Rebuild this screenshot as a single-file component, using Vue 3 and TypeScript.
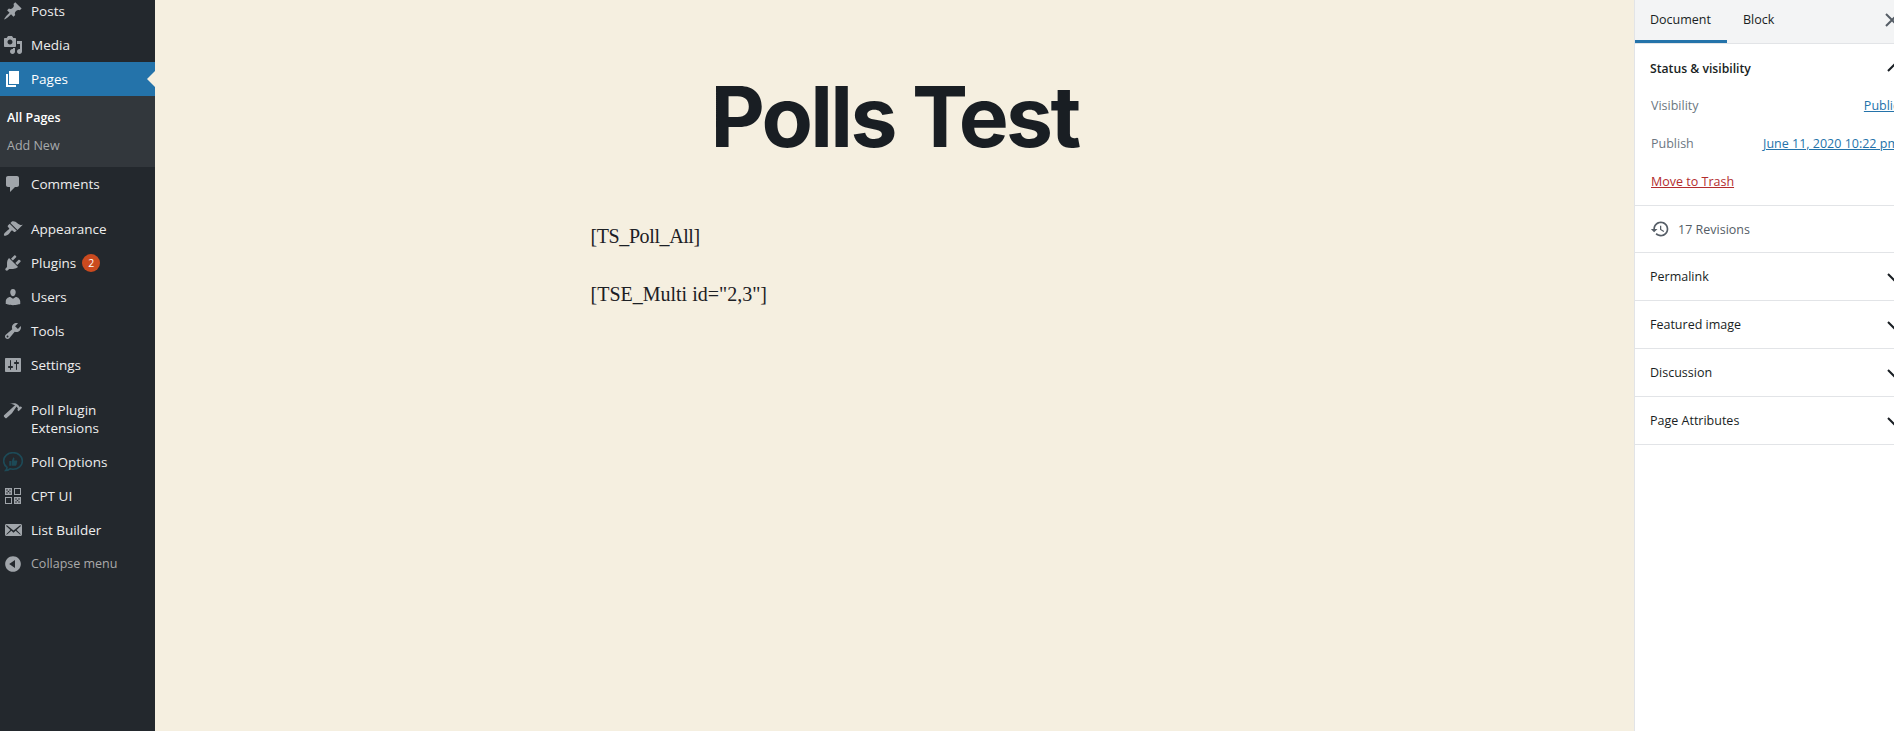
<script setup lang="ts">
interface MenuItem {
  label: string[];
  icon?: string;
  kind?: string;
  badge?: number;
  gapBefore?: boolean;
  current?: boolean;
}

const postIcon = 'M10.44 3.02l1.82-1.82 6.36 6.35-1.83 1.82c-1.05-.68-2.48-.57-3.41.36l-.75.75c-.92.93-1.04 2.35-.35 3.41l-1.83 1.82-2.41-2.41-2.8 2.79c-.42.42-3.38 2.71-3.8 2.29s1.86-3.39 2.28-3.81l2.79-2.79L4.1 9.36l1.83-1.82c1.05.69 2.48.57 3.4-.36l.75-.75c.93-.92 1.05-2.35.36-3.41z';
const mediaIcon = 'M13 11V4c0-.55-.45-1-1-1h-1.67L9 1H5L3.67 3H2c-.55 0-1 .45-1 1v7c0 .55.45 1 1 1h10c.55 0 1-.45 1-1zM7 4.5c1.38 0 2.5 1.12 2.5 2.5S8.38 9.5 7 9.5 4.5 8.38 4.5 7 5.62 4.5 7 4.5zM14 6h5v10.5c0 1.38-1.12 2.5-2.5 2.5S14 17.88 14 16.5s1.12-2.5 2.5-2.5c.17 0 .34.02.5.05V9h-3V6zm-4 8.05V13h2v3.5c0 1.38-1.12 2.5-2.5 2.5S7 17.88 7 16.5 8.12 14 9.5 14c.17 0 .34.02.5.05z';
const pageIcon = 'M6 15V2h10v13H6zm-1 1h8v2H3V5h2v11z';
const commentIcon = 'M5 2h9c1.1 0 2 .9 2 2v7c0 1.1-.9 2-2 2h-2l-5 5v-5H5c-1.1 0-2-.9-2-2V4c0-1.1.9-2 2-2z';
const brushIcon = 'M14.48 11.06L7.41 3.99l1.5-1.5c.5-.56 2.3-.47 3.51.32 1.21.8 1.43 1.28 2.91 2.1 1.18.64 2.45 1.26 4.45.85zm-.71.71L6.7 4.7 4.93 6.47c-.39.39-.39 1.02 0 1.41l1.06 1.06c.39.39.39 1.03 0 1.42-.6.6-1.43 1.11-2.21 1.69-.35.26-.7.53-1.01.84C1.43 13.23.4 15.93 1.08 16.6c.68.68 3.36-.35 4.7-1.7.31-.31.59-.65.85-1.01.58-.78 1.09-1.61 1.69-2.21.39-.39 1.02-.39 1.41 0l1.06 1.06c.39.39 1.02.39 1.41 0z';
const plugIcon = 'M13.11 4.36L9.87 7.6 8 5.73l3.24-3.24c.35-.34 1.05-.2 1.56.32.52.51.66 1.21.31 1.55zm-8 1.77l.91-1.12 9.01 9.01-1.19.84c-.71.71-2.63 1.16-3.82 1.16H6.14L4.9 17.26c-.59.59-1.54.59-2.12 0-.59-.58-.59-1.53 0-2.12l1.24-1.24v-3.88c0-1.13.4-3.19 1.09-3.89zm7.26 3.97l3.24-3.24c.34-.35 1.04-.21 1.55.31.52.51.66 1.21.31 1.55l-3.24 3.25z';
const userIcon = 'M10 9.25c-2.27 0-2.73-3.44-2.73-3.44C7 4.02 7.82 2 9.97 2c2.16 0 2.98 2.02 2.71 3.81 0 0-.41 3.44-2.68 3.44zm0 2.57L12.72 10c2.39 0 4.52 2.33 4.52 4.53v2.49s-3.65 1.13-7.24 1.13c-3.65 0-7.24-1.13-7.24-1.13v-2.49c0-2.25 1.94-4.48 4.47-4.48z';
const toolIcon = 'M16.68 9.77c-1.34 1.34-3.3 1.67-4.95.99l-5.41 6.52c-.99.99-2.59.99-3.58 0s-.99-2.59 0-3.57l6.52-5.42c-.68-1.65-.35-3.61.99-4.95 1.28-1.28 3.12-1.62 4.72-1.06l-2.89 2.89 2.82 2.82 2.86-2.87c.53 1.58.18 3.39-1.08 4.65zM3.81 16.21c.4.39 1.04.39 1.43 0 .4-.4.4-1.04 0-1.43-.39-.4-1.03-.4-1.43 0-.39.39-.39 1.03 0 1.43z';
const settingsIcon = 'M18 16V4c0-.55-.45-1-1-1H3c-.55 0-1 .45-1 1v12c0 .55.45 1 1 1h14c.55 0 1-.45 1-1zM8 11h1c.55 0 1 .45 1 1s-.45 1-1 1H8v1.5c0 .28-.22.5-.5.5s-.5-.22-.5-.5V13H6c-.55 0-1-.45-1-1s.45-1 1-1h1V5.5c0-.28.22-.5.5-.5s.5.22.5.5V11zm5-2h-1c-.55 0-1-.45-1-1s.45-1 1-1h1V5.5c0-.28.22-.5.5-.5s.5.22.5.5V7h1c.55 0 1 .45 1 1s-.45 1-1 1h-1v5.5c0 .28-.22.5-.5.5s-.5-.22-.5-.5V9z';
const hammerIcon = 'M17.7 6.32l1.41 1.42-3.47 3.41-1.42-1.42.84-.82c-.32-.76-.81-1.57-1.51-2.31l-4.61 6.59-5.26 4.7c-.39.39-1.02.39-1.42 0l-1.2-1.21c-.39-.39-.39-1.02 0-1.41l10.97-9.92c-1.37-.86-3.21-1.46-5.67-1.48 2.7-.82 4.95-.93 6.58-.3 1.7.66 2.82 2.2 3.91 3.58z';
const mailIcon = 'M19 14.5v-9c0-.83-.67-1.5-1.5-1.5H3.49c-.83 0-1.5.67-1.5 1.5v9c0 .83.67 1.5 1.5 1.5H17.5c.83 0 1.5-.67 1.5-1.5zm-1.31-9.11c.33.33.15.67-.03.84L13.6 9.95l3.9 4.06c.12.14.2.36.06.51-.13.16-.43.15-.56.05l-4.37-3.73-2.14 1.95-2.13-1.95-4.37 3.73c-.13.1-.43.11-.56-.05-.14-.15-.06-.37.06-.51l3.9-4.06-4.06-3.72c-.18-.17-.36-.51-.03-.84s.67-.17.95.07l6.24 5.04 6.25-5.04c.28-.24.62-.4.95-.07z';

const topItems: MenuItem[] = [
  { label: ['Posts'], icon: postIcon },
  { label: ['Media'], icon: mediaIcon },
  { label: ['Pages'], icon: pageIcon, current: true },
];

const restItems: MenuItem[] = [
  { label: ['Comments'], icon: commentIcon },
  { label: ['Appearance'], icon: brushIcon, gapBefore: true },
  { label: ['Plugins'], icon: plugIcon, badge: 2 },
  { label: ['Users'], icon: userIcon },
  { label: ['Tools'], icon: toolIcon },
  { label: ['Settings'], icon: settingsIcon },
  { label: ['Poll Plugin', 'Extensions'], icon: hammerIcon, gapBefore: true },
  { label: ['Poll Options'], kind: 'poll' },
  { label: ['CPT UI'], kind: 'cpt' },
  { label: ['List Builder'], icon: mailIcon },
];

const closedPanels = ['Permalink', 'Featured image', 'Discussion', 'Page Attributes'];
</script>

<template>
  <div class="editor">
    <aside class="adminMenu">
      <ul class="adminMenu__list">
        <li
          v-for="item in topItems"
          :key="item.label[0]"
          class="adminMenu__item"
          :class="{ '-current': item.current }"
        >
          <svg class="adminMenu__icon" viewBox="0 0 20 20"><path :d="item.icon" /></svg>
          <span class="adminMenu__label">{{ item.label[0] }}</span>
        </li>
      </ul>
      <ul class="subMenu">
        <li class="subMenu__item -current">All Pages</li>
        <li class="subMenu__item">Add New</li>
      </ul>
      <ul class="adminMenu__rest">
        <li
          v-for="item in restItems"
          :key="item.label[0]"
          class="adminMenu__item"
          :class="{ '-gap': item.gapBefore }"
        >
          <svg v-if="item.kind === 'poll'" class="adminMenu__icon -poll" viewBox="0.6 0.6 18.8 18.8">
            <path class="pollBubble" d="M10 1.2c4.9 0 8.8 3.4 8.8 7.8s-3.9 7.8-8.8 7.8c-1 0-2-.1-2.9-.4-1 .9-2.4 1.6-4 1.6.7-.8 1.2-1.9 1.3-3C2.500 13.600 1.200 11.400 1.200 9c0-4.400 3.900-7.800 8.800-7.800z" />
            <path class="pollThumb" d="M6.500 9h2v4.500h-2zM9 13.500V8.800l1.200-3c.9 0 1.300.6 1.100 1.500l-.3 1.200h2.200c.6 0 .9.500.8 1l-.7 3c-.1.500-.5 1-1 1z" />
          </svg>
          <svg v-else-if="item.kind === 'cpt'" class="adminMenu__icon -cpt" viewBox="0 0 20 20">
            <rect class="cptFill" x="2" y="2" width="7" height="7" />
            <rect class="cptLine" x="11.500" y="2.500" width="6" height="6" />
            <rect class="cptLine" x="2.500" y="11.500" width="6" height="6" />
            <rect class="cptFill" x="11" y="11" width="7" height="7" />
            <circle class="cptDot" cx="4" cy="4" r=".8" />
            <circle class="cptDot" cx="7" cy="4" r=".8" />
            <circle class="cptDot" cx="5.500" cy="5.500" r=".8" />
            <circle class="cptDot" cx="4" cy="7" r=".8" />
            <circle class="cptDot" cx="7" cy="7" r=".8" />
            <circle class="cptDot" cx="13" cy="13" r=".8" />
            <circle class="cptDot" cx="16" cy="13" r=".8" />
            <circle class="cptDot" cx="14.500" cy="14.500" r=".8" />
            <circle class="cptDot" cx="13" cy="16" r=".8" />
            <circle class="cptDot" cx="16" cy="16" r=".8" />
          </svg>
          <svg v-else class="adminMenu__icon" viewBox="0 0 20 20"><path :d="item.icon" /></svg>
          <span class="adminMenu__label">
            <template v-for="line in item.label" :key="line">{{ line }}<br v-if="item.label.length > 1" /></template>
            <span v-if="item.badge" class="adminMenu__badge">{{ item.badge }}</span>
          </span>
        </li>
        <li class="adminMenu__item -collapse">
          <svg class="adminMenu__icon" viewBox="0 0 20 20">
            <path d="M10 2.160c4.330 0 7.840 3.510 7.840 7.840s-3.510 7.840-7.840 7.840S2.160 14.330 2.160 10 5.710 2.160 10 2.160zm2 11.720V6.120L6.180 9.970z" />
          </svg>
          <span class="adminMenu__label">Collapse menu</span>
        </li>
      </ul>
    </aside>

    <main class="canvas">
      <h1 class="canvas__title">Polls Test</h1>
      <div class="canvas__body">
        <p class="-tight">[TS_Poll_All]</p>
        <p>[TSE_Multi id="2,3"]</p>
      </div>
    </main>

    <aside class="sidebar">
      <header class="sidebar__tabs">
        <span class="sidebar__tab -active">Document</span>
        <span class="sidebar__tab">Block</span>
        <svg class="sidebar__close" viewBox="0 0 24 24"><path d="M6 6l12 12M18 6L6 18" /></svg>
      </header>

      <section class="panel -open">
        <h2 class="panel__head">
          <span>Status &amp; visibility</span>
          <svg class="panel__chevron" viewBox="0 0 24 24"><path d="M6 15l6-6 6 6" /></svg>
        </h2>
        <div class="panel__row">
          <span>Visibility</span>
          <a class="panel__link">Public</a>
        </div>
        <div class="panel__row">
          <span>Publish</span>
          <a class="panel__link">June 11, 2020 10:22 pm</a>
        </div>
        <div class="panel__row">
          <a class="panel__trash">Move to Trash</a>
        </div>
      </section>

      <section class="revisions">
        <svg viewBox="0 0 24 24"><path d="M13 3c-4.970 0-9 4.030-9 9H1l3.890 3.890.070.140L9 12H6c0-3.870 3.130-7 7-7s7 3.130 7 7-3.130 7-7 7c-1.930 0-3.680-.790-4.940-2.060l-1.420 1.420C8.270 19.990 10.510 21 13 21c4.970 0 9-4.030 9-9s-4.030-9-9-9zm-1 5v5l4.280 2.540.720-1.210-3.500-2.080V8h-1.500z" /></svg>
        <span>17 Revisions</span>
      </section>

      <section v-for="title in closedPanels" :key="title" class="panel">
        <h2 class="panel__head -closed">
          <span>{{ title }}</span>
          <svg class="panel__chevron" viewBox="0 0 24 24"><path d="M6 9l6 6 6-6" /></svg>
        </h2>
      </section>
    </aside>
  </div>
</template>

<style scoped>
.editor {
  display: flex;
  height: 100vh;
  overflow: hidden;
  font-family: "Open Sans", "Noto Sans", sans-serif;
}

ul {
  list-style: none;
  margin: 0;
  padding: 0;
}

/* admin menu */
.adminMenu {
  width: 155px;
  flex-shrink: 0;
  background: #23282d;
  color: #eee;
  font-size: 13.5px;
}

.adminMenu__list {
  margin-top: -6px;
}

.adminMenu__item {
  display: flex;
  align-items: flex-start;
  padding: 7px 0;
  line-height: 20px;
  position: relative;
}

.adminMenu__item.-current {
  background: #2473aa;
  color: #fff;
}

.adminMenu__item.-current::after {
  content: "";
  position: absolute;
  right: 0;
  top: 50%;
  margin-top: -8px;
  border: 8px solid transparent;
  border-right-color: #f5efe0;
  border-left-width: 0;
}

.adminMenu__item.-gap {
  margin-top: 11px;
}

.adminMenu__icon {
  width: 20px;
  height: 20px;
  margin-left: 3px;
  margin-right: 8px;
  flex-shrink: 0;
  fill: #a0a5aa;
}

.-current .adminMenu__icon {
  fill: #fff;
}

.adminMenu__label {
  line-height: 18px;
  padding: 1px 0;
}

.adminMenu__badge {
  display: inline-block;
  width: 18px;
  height: 18px;
  margin-left: 6px;
  border-radius: 50%;
  background: #ca4a1f;
  color: #fff;
  font-size: 10.5px;
  line-height: 18px;
  text-align: center;
  vertical-align: top;
}

.-collapse {
  color: #aaa;
  font-size: 12.5px;
}

.pollBubble {
  fill: none;
  stroke: #1d4a57;
  stroke-width: 1.5;
}

.pollThumb {
  fill: #1d4a57;
}

.cptFill {
  fill: #a0a5aa;
}

.cptLine {
  fill: none;
  stroke: #a0a5aa;
  stroke-width: 1;
}

.cptDot {
  fill: #23282d;
}

.subMenu {
  background: #32373c;
  padding: 8px 0 7px;
  font-size: 12.5px;
}

.subMenu__item {
  padding: 5px 7px;
  line-height: 18px;
  color: #a7aaad;
}

.subMenu__item.-current {
  color: #fff;
  font-weight: 600;
}

/* canvas */
.canvas {
  flex: 0 0 calc(100vw - 415px);
  background: #f5efe0;
  color: #1c2024;
}

.canvas__title {
  margin: 0;
  padding-top: 70px;
  font-family: Inter, sans-serif;
  font-size: 84px;
  font-weight: 700;
  line-height: 94px;
  letter-spacing: -2.7px;
  text-align: center;
  color: #191e23;
}

.canvas__body {
  width: 608px;
  margin: 54px auto 0;
  font-family: "Liberation Serif", serif;
  font-size: 20px;
  line-height: 36px;
}

.canvas__body p {
  margin: 0 0 22px;
}

.canvas__body p.-tight {
  letter-spacing: -0.4px;
}

/* right sidebar */
.sidebar {
  width: 281px;
  flex-shrink: 0;
  background: #fff;
  border-left: 1px solid #e2e4e7;
  font-size: 12.5px;
  color: #191e23;
}

.sidebar__tabs {
  display: flex;
  height: 44px;
  box-sizing: border-box;
  background: #f3f4f5;
  border-bottom: 1px solid #e2e4e7;
  position: relative;
}

.sidebar__tab {
  padding: 0 15px 0 16px;
  line-height: 40px;
  height: 43px;
  box-sizing: border-box;
}

.sidebar__tab.-active {
  padding: 0 16px 0 15px;
  border-bottom: 3px solid #2473aa;
  font-weight: 500;
}

.sidebar__close {
  position: absolute;
  left: 245px;
  top: 8px;
  width: 24px;
  height: 24px;
  fill: none;
  stroke: #555d66;
  stroke-width: 2;
}

.panel,
.revisions {
  border-bottom: 1px solid #e2e4e7;
}

.panel__head {
  display: flex;
  align-items: center;
  justify-content: space-between;
  height: 47px;
  margin: 0;
  padding: 0 10px 0 15px;
  font-size: 12.5px;
  font-weight: 400;
}

.-open .panel__head {
  height: 48px;
  font-size: 12.2px;
  font-weight: 600;
}

.panel__chevron {
  width: 24px;
  height: 24px;
  fill: none;
  stroke: #191e23;
  stroke-width: 2;
}

.panel__row {
  display: flex;
  justify-content: space-between;
  padding: 0 17px 0 16px;
  height: 38px;
  line-height: 38px;
  margin-top: -5px;
  margin-bottom: 5px;
  color: #6c7781;
}

.panel__row:last-child {
  height: 42px;
  margin-bottom: 0;
}

.panel__link {
  color: #2473aa;
  text-decoration: underline;
}

.panel__trash {
  color: #b32d2e;
  text-decoration: underline;
}

.revisions {
  display: flex;
  align-items: center;
  gap: 8px;
  height: 46px;
  padding-left: 16px;
  color: #555d66;
}

.revisions svg {
  width: 20px;
  height: 20px;
  margin-left: -1px;
  fill: #555d66;
}
</style>

<style>
html,
body {
  overflow: hidden;
}
</style>
